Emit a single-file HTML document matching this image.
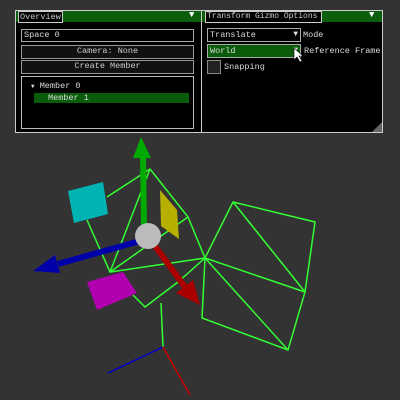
<!DOCTYPE html>
<html><head><style>
body{margin:0;width:400px;height:400px;background:#333;overflow:hidden;position:relative;font-family:"Liberation Mono",monospace;font-size:8.5px;color:#ddd}
.a{position:absolute;box-sizing:border-box;white-space:nowrap}
.panel{background:#000;border:1px solid #ccc}
.title{background:#0b5e0b}
.tab{border:1px solid #ccc;background:#000;color:#ccc;line-height:10px;padding-left:1px;overflow:hidden;font-size:8px}
.fld{border:1px solid #aaa;background:#000;line-height:11px;padding-left:2px}
.btn{border:1px solid #999;background:#111;line-height:11px;text-align:center;color:#ccc}
.t{line-height:11px}
</style></head><body>
<div class="a panel" style="left:15px;top:10px;width:187px;height:123px"></div>
<div class="a title" style="left:16px;top:11px;width:185px;height:11px"></div>
<div class="a tab" style="left:18px;top:11px;width:45px;height:12px;font-size:8.5px">Overview</div>
<div class="a" style="left:189px;top:10px;color:#fff;font-size:9px">▼</div>
<div class="a fld" style="left:21px;top:29px;width:173px;height:13px">Space 0</div>
<div class="a btn" style="left:21px;top:45px;width:173px;height:14px">Camera: None</div>
<div class="a btn" style="left:21px;top:60px;width:173px;height:14px">Create Member</div>
<div class="a" style="left:21px;top:76px;width:173px;height:53px;border:1px solid #bbb"></div>
<div class="a t" style="left:31px;top:81px"><span style="font-size:6px">▼</span> Member 0</div>
<div class="a t" style="left:34px;top:93px;width:155px;height:10px;background:#0a5c0a;padding-left:14px;line-height:10px">Member 1</div>

<div class="a panel" style="left:201px;top:10px;width:182px;height:123px"></div>
<div class="a title" style="left:202px;top:11px;width:180px;height:11px"></div>
<div class="a tab" style="left:205px;top:11px;width:117px;height:12px">Transform Gizmo Options</div>
<div class="a" style="left:369px;top:10px;color:#fff;font-size:9px">▼</div>
<div class="a fld" style="left:207px;top:28px;width:94px;height:14px;line-height:12px">Translate<span style="position:absolute;right:2px;font-size:8px">▼</span></div>
<div class="a t" style="left:303px;top:30px">Mode</div>
<div class="a fld" style="left:207px;top:44px;width:94px;height:14px;line-height:12px;background:#0a5c0a">World<span style="position:absolute;right:2px;font-size:8px">▼</span></div>
<div class="a t" style="left:304px;top:46px">Reference Frame</div>
<div class="a" style="left:207px;top:60px;width:14px;height:14px;border:1px solid #888;background:#222"></div>
<div class="a t" style="left:224px;top:62px">Snapping</div>
<svg class="a" style="left:0;top:0" width="400" height="400">
<polygon points="382,122 382,132 372,132" fill="#666"/>
<polygon points="294,48 294,60 297,57 300,62 302,61 299,56 303,56" fill="#fff" stroke="#000" stroke-width="0.6"/>
<g stroke="#3f3" stroke-width="1.5" fill="none">
<polyline points="107,197 150,169 188,217 205,258 233,202 315,222 305,292 288,350 202,318 205,258"/>
<line x1="150" y1="169" x2="110" y2="272"/>
<polyline points="87,220 110,272 205,258"/>
<line x1="110" y1="272" x2="188" y2="217"/>
<line x1="233" y1="202" x2="305" y2="292"/>
<line x1="205" y1="258" x2="305" y2="292"/>
<line x1="205" y1="258" x2="288" y2="350"/>
<polyline points="133,295 145,307 178,282 205,258"/>
<line x1="161" y1="303" x2="163" y2="347"/>
</g>
<line x1="163" y1="347" x2="108" y2="373" stroke="#00c" stroke-width="1.5"/>
<line x1="163" y1="347" x2="190" y2="395" stroke="#c00" stroke-width="1.5"/>
<polygon points="68,191 103,182 108,214 74,223" fill="#00b4b4"/>
<polygon points="160,190 177,210 179,239 161,226" fill="#b8b000"/>
<polygon points="87,282 123,272 137,293 97,310" fill="#b000b0"/>
<line x1="144" y1="226" x2="143" y2="155" stroke="#0a0" stroke-width="6"/>
<polygon points="141,137 133,158 151,158" fill="#0a0"/>
<line x1="140" y1="241" x2="58" y2="264" stroke="#00a" stroke-width="6"/>
<polygon points="33,271 55,255 60,273" fill="#00a"/>
<line x1="152" y1="242" x2="185" y2="287" stroke="#a00" stroke-width="6"/>
<polygon points="200,305 176,293 193,280" fill="#a00"/>
<circle cx="148" cy="236" r="13" fill="#bbb"/>
</svg>
</body></html>
